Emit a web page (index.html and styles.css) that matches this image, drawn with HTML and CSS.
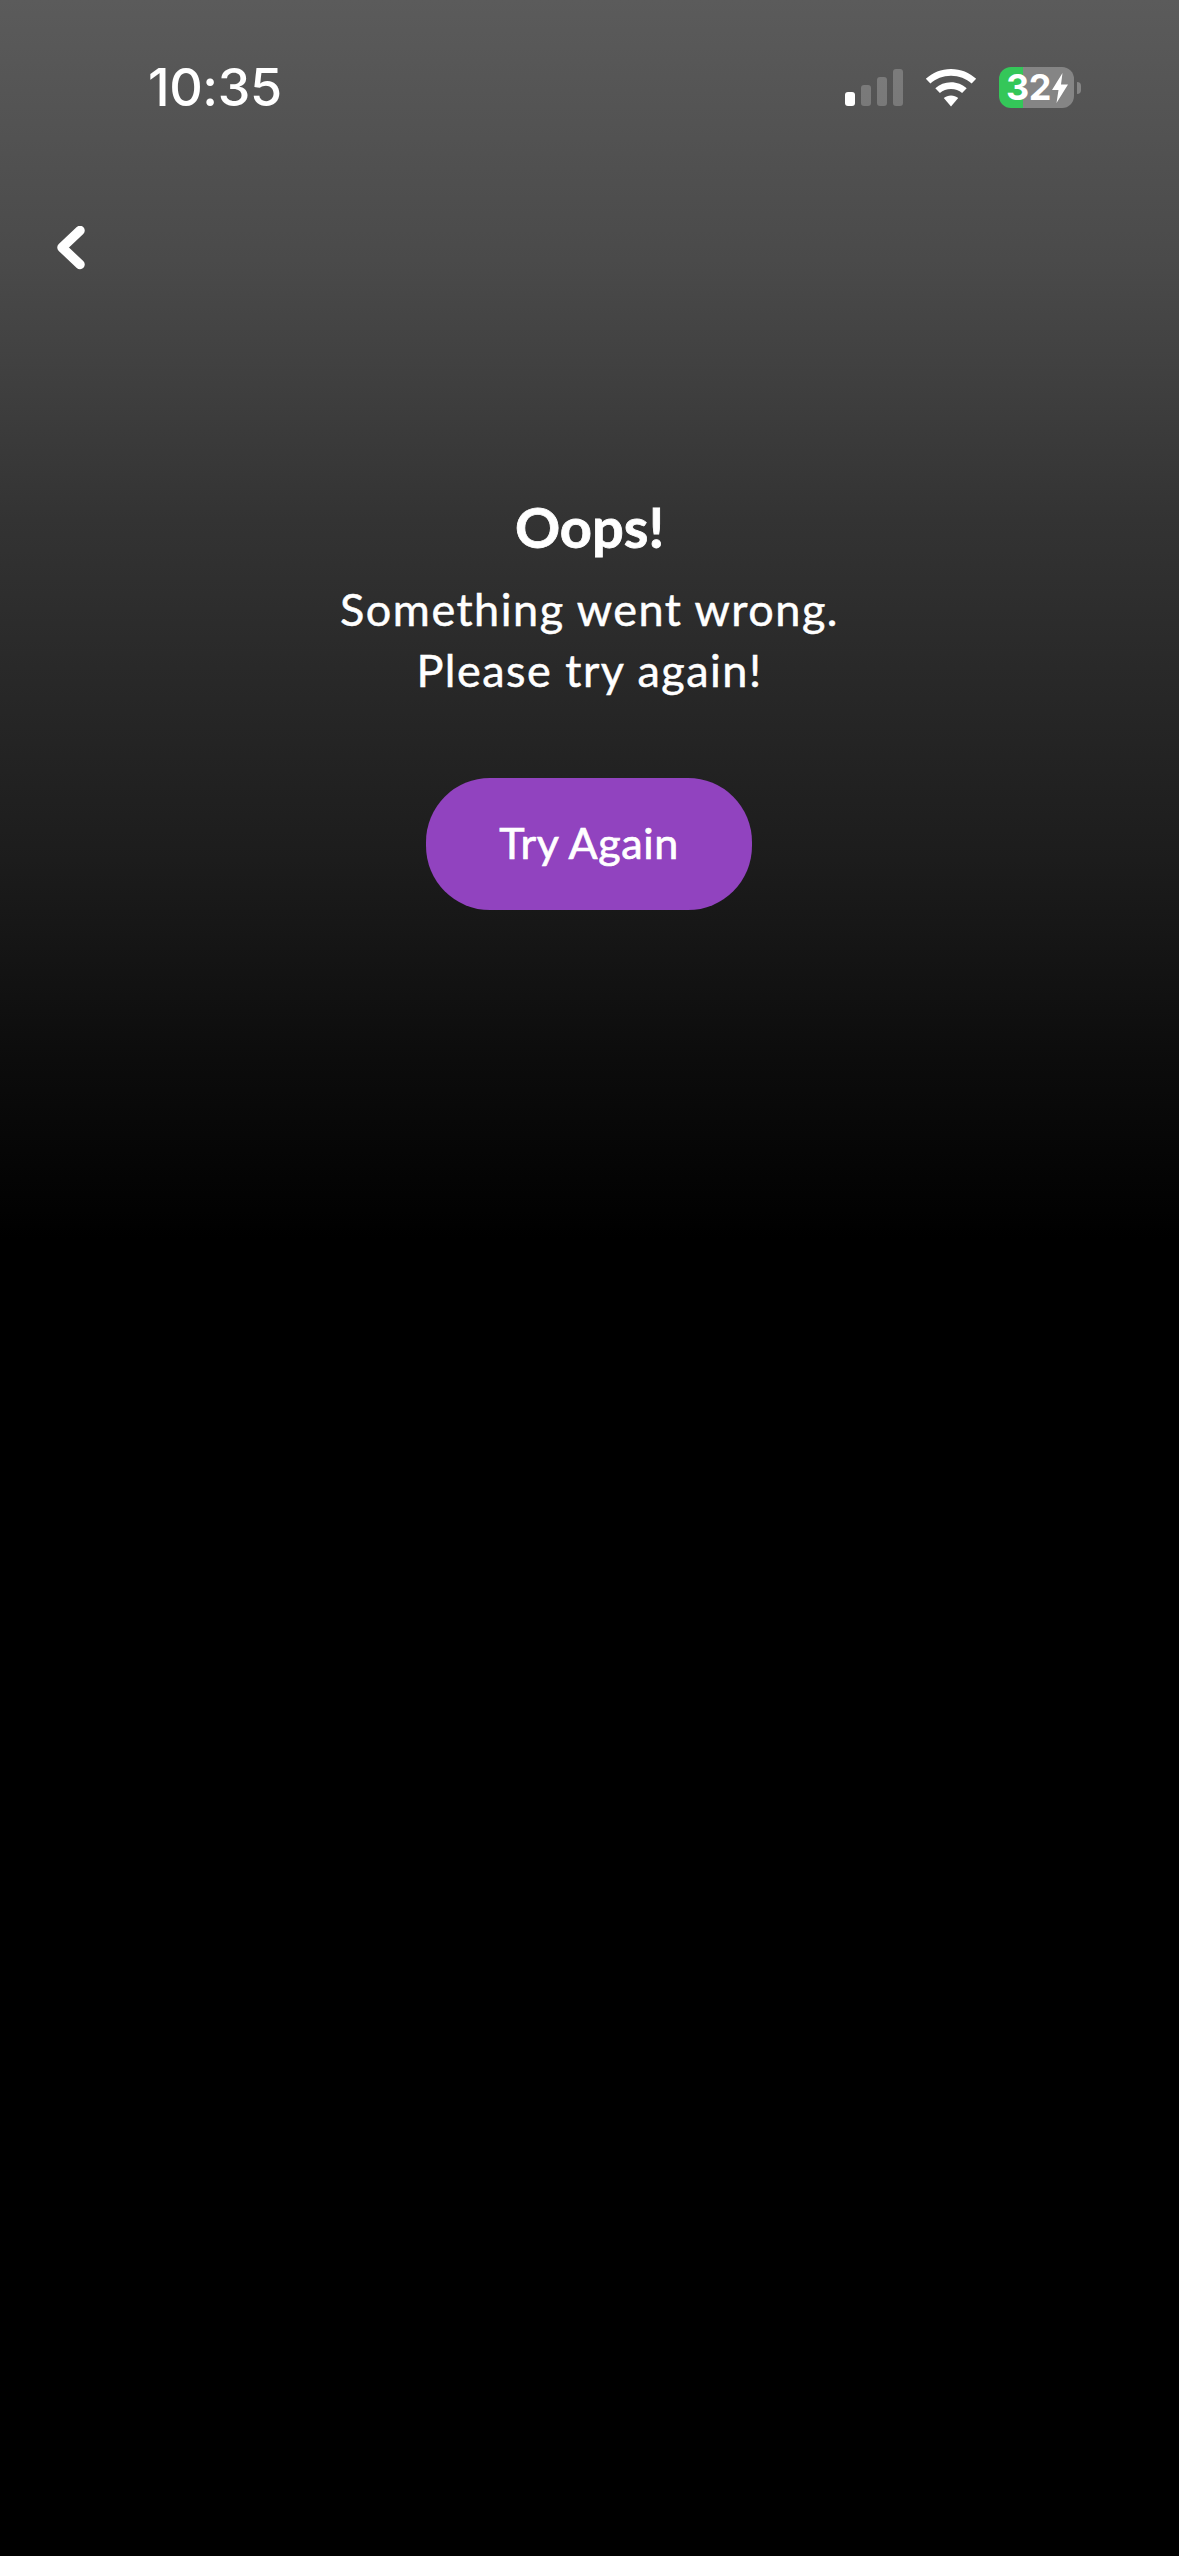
FILE: index.html
```html
<!DOCTYPE html>
<html lang="en">
<head>
<meta charset="utf-8">
<title>Oops!</title>
<link rel="stylesheet" href="styles.css">
</head>
<body>
<div class="screen">
  <header class="status-bar">
    <span class="clock">10:35</span>
    <div class="status-icons">
      <svg class="signal" width="58" height="37" viewBox="0 0 58 37">
        <rect class="bar-on" x="0" y="23" width="10" height="14" rx="3"/>
        <rect class="bar-off" x="16" y="16" width="10" height="21" rx="3"/>
        <rect class="bar-off" x="32" y="8" width="10" height="29" rx="3"/>
        <rect class="bar-off" x="48" y="0" width="10" height="37" rx="3"/>
      </svg>
      <svg class="wifi" width="52" height="38" viewBox="0 0 52 38">
        <path d="M26 0C16.300 0 7.500 3.700 .8 9.800L5.400 14.600C10.800 9.700 18 6.800 26 6.800S41.200 9.700 46.600 14.600L51.200 9.800C44.500 3.700 35.700 0 26 0Z"/>
        <path d="M26 13.200C20 13.200 14.500 15.500 10.300 19.200L14.900 24C17.900 21.400 21.800 19.900 26 19.900S34.100 21.400 37.100 24L41.700 19.200C37.500 15.500 32 13.200 26 13.200Z"/>
        <path d="M26 26.400C23.300 26.400 20.800 27.400 18.800 29L26 37.500L33.200 29C31.200 27.400 28.700 26.400 26 26.400Z"/>
      </svg>
      <div class="battery">
        <div class="battery-body">
          <span class="battery-level">32</span>
          <svg class="bolt" width="16" height="30" viewBox="0 0 16 30">
            <path d="M10.500 0L0 17H6.500L4.500 30L16 11.500H9Z"/>
          </svg>
        </div>
        <span class="battery-nub"></span>
      </div>
    </div>
  </header>

  <nav class="nav-bar">
    <button class="back" type="button" aria-label="Back">
      <svg width="30" height="44" viewBox="0 0 30 44">
        <path d="M23 4.500L5 21.500L23 38.500"/>
      </svg>
    </button>
  </nav>

  <main class="message">
    <h1 class="title">Oops!</h1>
    <p class="body-text">Something went wrong.<br>Please try again!</p>
    <button class="retry" type="button">Try Again</button>
  </main>
</div>
</body>
</html>
```

FILE: styles.css
```css
* {
  box-sizing: border-box;
}

html,
body {
  margin: 0;
  background: #000;
}

.screen {
  width: 1179px;
  height: 2556px;
  overflow: hidden;
  display: flex;
  flex-direction: column;
  color: #fff;
  background: linear-gradient(180deg, #5b5b5b 0, #4a4a4a 260px, #333 520px, #1c1c1c 860px, #0c0c0c 1060px, #000 1240px);
  font-family: "Lato", "Noto Sans", sans-serif;
}

/* Status bar */
.status-bar {
  height: 175px;
  padding: 58px 98px 0 148px;
  display: flex;
  justify-content: space-between;
  align-items: flex-start;
}

.clock {
  font-family: "Inter", "Liberation Sans", sans-serif;
  font-size: 52px;
  font-weight: 500;
  line-height: 60px;
  letter-spacing: -.4px;
}

.status-icons {
  margin-top: 9px;
  display: flex;
  align-items: center;
  gap: 22px;
}

.signal {
  margin-left: 1px;
}

.signal .bar-on {
  fill: #fff;
}

.signal .bar-off {
  fill: rgba(255, 255, 255, .22);
}

.wifi path {
  fill: #fff;
}

.battery {
  display: flex;
  align-items: center;
  gap: 3px;
}

.battery-body {
  width: 75px;
  height: 41px;
  border-radius: 12px;
  display: flex;
  align-items: center;
  gap: 1px;
  padding-left: 7px;
  background: linear-gradient(90deg, #34c759 0, #34c759 24px, #858585 24px);
}

.battery-level {
  font-family: "Inter", "Liberation Sans", sans-serif;
  font-size: 36px;
  font-weight: 700;
  line-height: 41px;
  letter-spacing: -.5px;
}

.bolt path {
  fill: #fff;
}

.battery-nub {
  width: 4px;
  height: 12px;
  border-radius: 0 6px 6px 0;
  background: #858585;
}

/* Back control */
.nav-bar {
  height: 95px;
  padding: 51px 0 0 57px;
}

.back {
  display: block;
  padding: 0;
  border: 0;
  background: none;
}

.back svg {
  display: block;
}

.back path {
  fill: none;
  stroke: #fff;
  stroke-width: 9.500;
  stroke-linecap: round;
  stroke-linejoin: round;
}

/* Error message */
.message {
  display: flex;
  flex-direction: column;
  align-items: center;
  text-align: center;
}

.title {
  margin: 221px 0 0;
  font-size: 56px;
  font-weight: 700;
  line-height: 72px;
  -webkit-text-stroke: .8px #fff;
}

.body-text {
  margin: 16px 0 0;
  font-size: 45px;
  font-weight: 400;
  line-height: 61px;
  letter-spacing: 1.5px;
  -webkit-text-stroke: .5px #fff;
}

.retry {
  width: 326px;
  height: 132px;
  margin: 77px 1px 0 0;
  padding: 0 0 3px;
  border: 0;
  border-radius: 64px;
  color: #fff;
  background: #9143bf;
  font-family: inherit;
  font-size: 43px;
  font-weight: 400;
  letter-spacing: .6px;
  -webkit-text-stroke: .7px #fff;
}
```
